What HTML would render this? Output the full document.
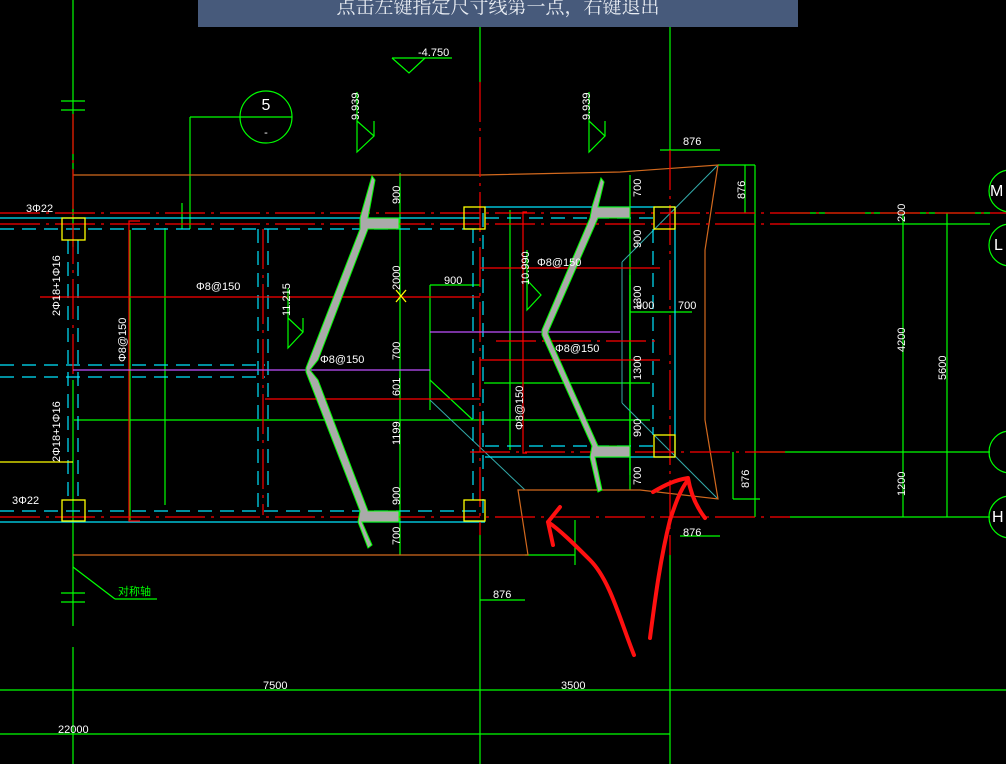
<!DOCTYPE html>
<html><head><meta charset="utf-8"><style>
html,body{margin:0;padding:0;background:#000;width:1006px;height:764px;overflow:hidden}
svg{display:block}
.t{font-family:"Liberation Sans",sans-serif;fill:#fff;font-size:11px}
</style></head><body>
<svg width="1006" height="764" viewBox="0 0 1006 764" xmlns="http://www.w3.org/2000/svg">
<rect width="1006" height="764" fill="#000"/>
<!-- vertical grid lines -->
<g stroke="#00ff00" stroke-width="1.2" fill="none">
<line x1="73" y1="0" x2="73" y2="114"/>
<line x1="73" y1="114" x2="73" y2="247"/>
<line x1="73" y1="380" x2="73" y2="626"/>
<line x1="73" y1="647" x2="73" y2="764"/>
<line x1="61" y1="101" x2="85" y2="101"/><line x1="61" y1="110" x2="85" y2="110"/>
<line x1="61" y1="593" x2="85" y2="593"/><line x1="61" y1="602" x2="85" y2="602"/>
<line x1="480" y1="27" x2="480" y2="82"/>
<line x1="480" y1="535" x2="480" y2="764"/>
<line x1="670" y1="27" x2="670" y2="150"/>
<line x1="670" y1="555" x2="670" y2="764"/>
<line x1="400" y1="173" x2="400" y2="555"/>
<line x1="165" y1="228" x2="165" y2="505"/>
<line x1="190" y1="117" x2="190" y2="229"/>
<line x1="190" y1="117" x2="240" y2="117"/>
<line x1="182" y1="203" x2="182" y2="229"/>
<line x1="0" y1="690" x2="1006" y2="690"/>
<line x1="0" y1="734" x2="670" y2="734"/>
<line x1="74" y1="420" x2="650" y2="420"/>
<line x1="73" y1="567" x2="115" y2="599"/><line x1="115" y1="599" x2="157" y2="599"/>
<!-- right dims -->
<line x1="718" y1="165" x2="755" y2="165"/>
<line x1="745" y1="165" x2="745" y2="213"/>
<line x1="755" y1="165" x2="755" y2="517"/>
<line x1="790" y1="213" x2="990" y2="213"/>
<line x1="790" y1="224" x2="990" y2="224"/>
<line x1="760" y1="452" x2="990" y2="452"/>
<line x1="790" y1="517" x2="990" y2="517"/>
<line x1="903" y1="213" x2="903" y2="517"/>
<line x1="947" y1="213" x2="947" y2="517"/>
<line x1="733" y1="499" x2="760" y2="499"/>
<line x1="733" y1="452" x2="733" y2="499"/>
<line x1="660" y1="150" x2="720" y2="150"/>
<line x1="680" y1="536" x2="720" y2="536"/>
<line x1="480" y1="600" x2="525" y2="600"/>
<line x1="630" y1="312" x2="692" y2="312"/>
<line x1="430" y1="285" x2="480" y2="285"/>
<line x1="430" y1="285" x2="430" y2="410"/>
<line x1="630" y1="312" x2="630" y2="470"/>
<line x1="630" y1="312" x2="630" y2="270"/>
<line x1="630" y1="275" x2="630" y2="475"/>
<line x1="630" y1="175" x2="630" y2="490"/>
<line x1="484" y1="383" x2="650" y2="383"/>
<line x1="430" y1="380" x2="473" y2="420"/>
<line x1="525" y1="555" x2="575" y2="555"/>
<line x1="575" y1="520" x2="575" y2="565"/>
<line x1="510" y1="210" x2="510" y2="450"/>
<line x1="130" y1="230" x2="130" y2="520"/>
</g>
<!-- thin diagonals -->
<g stroke="#3aa" stroke-width="1" fill="none">
<line x1="622" y1="262" x2="718" y2="165"/>
<line x1="622" y1="262" x2="622" y2="403"/>
<line x1="622" y1="403" x2="718" y2="499"/>
<line x1="430" y1="400" x2="525" y2="490"/>
</g>
<!-- orange -->
<g stroke="#d2691e" stroke-width="1.2" fill="none">
<line x1="73" y1="175" x2="480" y2="175"/>
<polyline points="480,175 620,172 718,165 705,250 705,420 718,499 640,490 518,490 528,555 73,555"/>
</g>
<!-- cyan -->
<g stroke="#00e5ff" stroke-width="1.2" fill="none">
<line x1="0" y1="218" x2="480" y2="218"/>
<line x1="0" y1="522" x2="485" y2="522"/>
<line x1="0" y1="229" x2="480" y2="229" stroke-dasharray="14,8"/>
<line x1="0" y1="511" x2="480" y2="511" stroke-dasharray="14,8"/>
<line x1="68" y1="240" x2="68" y2="500" stroke-dasharray="14,8"/>
<line x1="78" y1="240" x2="78" y2="500" stroke-dasharray="14,8"/>
<line x1="258" y1="229" x2="258" y2="511" stroke-dasharray="14,8"/>
<line x1="268" y1="229" x2="268" y2="511" stroke-dasharray="14,8"/>
<line x1="485" y1="207" x2="675" y2="207"/>
<line x1="485" y1="457" x2="675" y2="457"/>
<line x1="675" y1="207" x2="675" y2="457"/>
<line x1="483" y1="213" x2="483" y2="522" stroke-dasharray="14,8"/>
<line x1="473" y1="229" x2="473" y2="500" stroke-dasharray="14,8"/>
<line x1="485" y1="446" x2="655" y2="446" stroke-dasharray="14,8"/>
<line x1="485" y1="218" x2="655" y2="218" stroke-dasharray="14,8"/>
<line x1="653" y1="229" x2="653" y2="435" stroke-dasharray="14,8"/>
<line x1="0" y1="365" x2="265" y2="365" stroke-dasharray="14,8"/>
<line x1="0" y1="377" x2="265" y2="377" stroke-dasharray="14,8"/>
</g>
<!-- red -->
<g stroke="#ff0000" stroke-width="1.2" fill="none">
<line x1="0" y1="213" x2="1006" y2="213" stroke-dasharray="40,6,3,6"/>
<line x1="0" y1="224" x2="790" y2="224" stroke-dasharray="40,6,3,6"/>
<line x1="0" y1="517" x2="790" y2="517" stroke-dasharray="40,6,3,6"/>
<line x1="470" y1="452" x2="790" y2="452" stroke-dasharray="40,6,3,6"/>
<line x1="480" y1="82" x2="480" y2="535" stroke-dasharray="40,6,3,6"/>
<line x1="670" y1="150" x2="670" y2="555" stroke-dasharray="40,6,3,6"/>
<line x1="73" y1="114" x2="73" y2="380" stroke-dasharray="40,6,3,6"/>
<line x1="263" y1="229" x2="263" y2="515" stroke-dasharray="40,6,3,6"/>
<polyline points="140,521 129,521 129,221 140,221"/>
<line x1="40" y1="297" x2="480" y2="297"/>
<line x1="480" y1="268" x2="660" y2="268"/>
<line x1="480" y1="360" x2="660" y2="360"/>
<line x1="265" y1="399" x2="480" y2="399"/>
<polyline points="527,212 523,212 523,453 527,453"/>
<line x1="496" y1="341" x2="655" y2="341" stroke-dasharray="40,6,3,6"/>
</g>
<!-- magenta -->
<g stroke="#c050ff" stroke-width="1.2">
<line x1="73" y1="370" x2="430" y2="370"/>
<line x1="430" y1="332" x2="620" y2="332"/>
</g>
<!-- walls -->
<g fill="#aaaaaa" stroke="#00ff00" stroke-width="1">
<polygon points="372,176 375,180 368,218 399,218 399,229 368,229 318,360 310,370 318,380 368,511 399,511 399,522 362,522 372,545 368,548 358,522 360,511 306,372 306,368 360,229 360,218"/>
<polygon points="601,178 604,182 598,207 630,207 630,218 598,218 548,332 548,334 598,446 630,446 630,457 595,457 602,490 598,492 590,457 592,446 542,335 542,330 590,218 592,207"/>
</g>
<!-- yellow boxes -->
<g stroke="#ffff00" stroke-width="1.3" fill="none">
<rect x="62" y="218" width="23" height="22"/>
<rect x="464" y="207" width="21" height="22"/>
<rect x="654" y="207" width="21" height="22"/>
<rect x="654" y="435" width="21" height="22"/>
<rect x="464" y="500" width="21" height="21"/>
<rect x="62" y="500" width="23" height="21"/>
<line x1="0" y1="462" x2="73" y2="462"/>
<line x1="396" y1="290" x2="406" y2="302"/><line x1="406" y1="290" x2="396" y2="302"/>
</g>
<!-- circle 5 and elevation marks -->
<g stroke="#00ff00" stroke-width="1.2" fill="none">
<circle cx="266" cy="117" r="26"/>
<line x1="240" y1="117" x2="292" y2="117"/>
<polyline points="392,58 452,58"/><polyline points="392,58 409,73 425,58"/>
<polyline points="357,92 357,152 374,136 357,121"/><line x1="374" y1="121" x2="374" y2="136"/>
<polyline points="589,92 589,152 605,136 589,121"/><line x1="605" y1="121" x2="605" y2="136"/>
<polyline points="288,288 288,348 303,332 288,318"/><line x1="303" y1="318" x2="303" y2="332"/>
<polyline points="527,250 527,310 541,295 527,280"/>
<circle cx="1010" cy="191" r="21"/><circle cx="1010" cy="245" r="21"/>
<circle cx="1010" cy="452" r="21"/><circle cx="1010" cy="517" r="21"/>
</g>
<!-- red hand arrows -->
<g stroke="#ff1010" stroke-width="4" fill="none" stroke-linecap="round" stroke-linejoin="round">
<path d="M650,638 C655,600 660,560 670,520 C675,505 680,490 688,480 M653,492 C665,485 675,480 688,478 C690,490 695,505 705,518"/>
<path d="M634,655 C620,620 610,580 590,560 C575,545 560,530 548,522 M548,522 L560,507 M548,522 L553,545"/>
</g>
<!-- text -->
<g class="t">
<text x="266" y="110" font-size="16" text-anchor="middle">5</text>
<text x="266" y="136" text-anchor="middle">-</text>
<text x="418" y="56">-4.750</text>
<text x="26" y="212">3Φ22</text>
<text x="12" y="504">3Φ22</text>
<text x="196" y="290">Φ8@150</text>
<text x="537" y="266">Φ8@150</text>
<text x="555" y="352">Φ8@150</text>
<text x="320" y="363">Φ8@150</text>
<text x="444" y="284">900</text>
<text x="636" y="309">900</text>
<text x="678" y="309">700</text>
<text x="683" y="145">876</text>
<text x="683" y="536">876</text>
<text x="493" y="598">876</text>
<text x="263" y="689">7500</text>
<text x="561" y="689">3500</text>
<text x="58" y="733">22000</text>
<text x="990" y="196" font-size="16">M</text>
<text x="994" y="250" font-size="16">L</text>
<text x="992" y="522" font-size="16">H</text>
<text transform="translate(400,204) rotate(-90)">900</text>
<text transform="translate(400,290) rotate(-90)">2000</text>
<text transform="translate(400,360) rotate(-90)">700</text>
<text transform="translate(400,396) rotate(-90)">601</text>
<text transform="translate(400,445) rotate(-90)">1199</text>
<text transform="translate(400,505) rotate(-90)">900</text>
<text transform="translate(400,545) rotate(-90)">700</text>
<text transform="translate(641,197) rotate(-90)">700</text>
<text transform="translate(641,248) rotate(-90)">900</text>
<text transform="translate(641,310) rotate(-90)">1300</text>
<text transform="translate(641,380) rotate(-90)">1300</text>
<text transform="translate(641,437) rotate(-90)">900</text>
<text transform="translate(641,485) rotate(-90)">700</text>
<text transform="translate(745,199) rotate(-90)">876</text>
<text transform="translate(749,488) rotate(-90)">876</text>
<text transform="translate(905,222) rotate(-90)">200</text>
<text transform="translate(905,352) rotate(-90)">4200</text>
<text transform="translate(905,496) rotate(-90)">1200</text>
<text transform="translate(946,380) rotate(-90)">5600</text>
<text transform="translate(359,120) rotate(-90)">9.939</text>
<text transform="translate(590,120) rotate(-90)">9.939</text>
<text transform="translate(290,316) rotate(-90)">11.215</text>
<text transform="translate(529,285) rotate(-90)">10.990</text>
<text transform="translate(60,316) rotate(-90)">2Φ18+1Φ16</text>
<text transform="translate(60,462) rotate(-90)">2Φ18+1Φ16</text>
<text transform="translate(126,362) rotate(-90)">Φ8@150</text>
<text transform="translate(523,430) rotate(-90)">Φ8@150</text>
</g>
<text x="118" y="595" font-family="Liberation Sans,'Noto Sans CJK SC',sans-serif" font-size="11" fill="#00ff00">对称轴</text>
<!-- banner -->
<rect x="198" y="0" width="600" height="27" fill="#475a7b"/>
<text x="498" y="13" text-anchor="middle" font-family="'Liberation Serif','Noto Serif CJK SC',serif" font-size="19" fill="#e8ecf2">点击左键指定尺寸线第一点，右键退出</text>
</svg>
</body></html>
